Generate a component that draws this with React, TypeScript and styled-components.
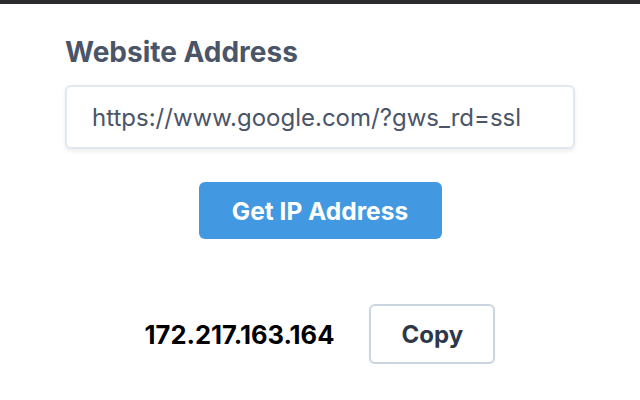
import React from 'react';
import styled, { createGlobalStyle } from 'styled-components';

const GlobalStyle = createGlobalStyle`
  html, body {
    margin: 0;
    padding: 0;
    background: #ffffff;
    font-family: Inter, "Open Sans", "Liberation Sans", sans-serif;
  }
`;

const TopBar = styled.div`
  height: 4px;
  background: #2b2b2d;
`;

const Container = styled.div`
  width: 510px;
  margin: 0 auto;
  padding-top: 31px;
  display: flex;
  flex-direction: column;
`;

const Label = styled.label`
  display: block;
  font-size: 28px;
  font-weight: 700;
  color: #4a5568;
  line-height: 34px;
  margin-bottom: 16px;
`;

const Input = styled.input`
  box-sizing: border-box;
  width: 100%;
  height: 64px;
  padding: 0 25px;
  border: 2px solid #e2e8f0;
  border-radius: 6px;
  box-shadow: 0 2px 4px rgba(0, 0, 0, 0.08);
  font-family: inherit;
  font-size: 24px;
  color: #4a5568;
  outline: 0;
`;

const Center = styled.div`
  display: flex;
  justify-content: center;
  margin-top: 33px;
`;

const PrimaryButton = styled.button`
  width: 243px;
  height: 57px;
  padding: 0;
  border: 0;
  border-radius: 6px;
  background: #4299e1;
  color: #ffffff;
  font-family: inherit;
  font-size: 24.5px;
  font-weight: 700;
  cursor: pointer;
`;

const ResultRow = styled.div`
  display: flex;
  align-items: center;
  justify-content: center;
  gap: 35px;
  margin-top: 65px;
`;

const Ip = styled.span`
  font-size: 25.5px;
  font-weight: 700;
  color: #000000;
`;

const CopyButton = styled.button`
  width: 126px;
  height: 60px;
  padding: 0;
  background: #ffffff;
  border: 2px solid #cbd5e0;
  border-radius: 6px;
  box-shadow: 0 1px 2px rgba(0, 0, 0, 0.05);
  color: #2d3748;
  font-family: inherit;
  font-size: 24px;
  font-weight: 700;
  cursor: pointer;
`;

export default function App() {
  return (
    <>
      <GlobalStyle />
      <TopBar />
      <Container>
        <Label htmlFor="url">Website Address</Label>
        <Input id="url" type="text" defaultValue="https://www.google.com/?gws_rd=ssl" />
        <Center>
          <PrimaryButton type="button">Get IP Address</PrimaryButton>
        </Center>
        <ResultRow>
          <Ip>172.217.163.164</Ip>
          <CopyButton type="button">Copy</CopyButton>
        </ResultRow>
      </Container>
    </>
  );
}
